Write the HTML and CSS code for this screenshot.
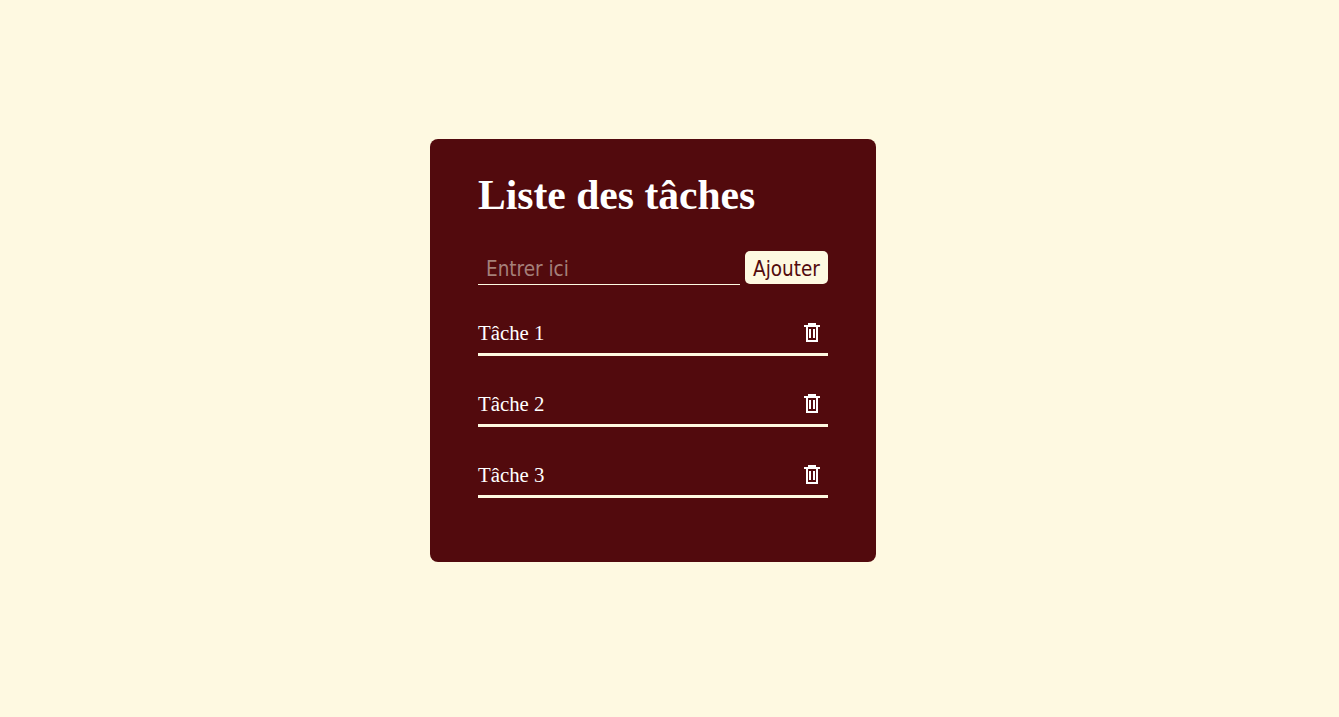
FILE: index.html
```html
<!DOCTYPE html>
<html lang="fr">
<head>
    <meta charset="UTF-8">
    <meta name="viewport" content="width=device-width, initial-scale=1.0">
    <title>Liste des tâches</title>
    <link rel="stylesheet" href="styles.css">
</head>
<body>
    <div class="todo-card">
        <h1 class="todo-title">Liste des tâches</h1>

        <!-- Add form -->
        <form class="todo-form">
            <input type="text" class="todo-input" placeholder="Entrer ici">
            <button type="button" class="add-btn">Ajouter</button>
        </form>

        <!-- Tasks -->
        <ul class="todo-list">
            <li class="todo-item">
                <span>Tâche 1</span>
                <button type="button" class="delete-btn" aria-label="Supprimer">
                    <svg viewBox="0 0 16 19"><path d="M0 3h16M5 3V1h6v2M3 3v15h10V3M6 6v9M10 6v9"/></svg>
                </button>
            </li>
            <li class="todo-item">
                <span>Tâche 2</span>
                <button type="button" class="delete-btn" aria-label="Supprimer">
                    <svg viewBox="0 0 16 19"><path d="M0 3h16M5 3V1h6v2M3 3v15h10V3M6 6v9M10 6v9"/></svg>
                </button>
            </li>
            <li class="todo-item">
                <span>Tâche 3</span>
                <button type="button" class="delete-btn" aria-label="Supprimer">
                    <svg viewBox="0 0 16 19"><path d="M0 3h16M5 3V1h6v2M3 3v15h10V3M6 6v9M10 6v9"/></svg>
                </button>
            </li>
        </ul>
    </div>
</body>
</html>
```

FILE: styles.css
```css
* {
    margin: 0;
    padding: 0;
    box-sizing: border-box;
}

body {
    font-family: "Liberation Serif", serif;
    background: #fef9e1;
    min-height: 100vh;
    display: flex;
    align-items: flex-start;
    justify-content: center;
    padding-top: 139px;
    padding-right: 33px;
}

.todo-card {
    width: 446px;
    height: 423px;
    background: #520a0d;
    border-radius: 8px;
    padding: 33px 48px;
    color: white;
}

.todo-title {
    font-size: 41.6px;
    line-height: 47px;
    font-weight: bold;
    margin-bottom: 32px;
}

.todo-form {
    display: flex;
    justify-content: space-between;
    align-items: flex-start;
    height: 34px;
    margin-bottom: 28px;
}

.todo-input {
    width: 262px;
    height: 34px;
    background: transparent;
    border: none;
    border-bottom: 1px solid #fef9e1;
    outline: none;
    color: white;
    font-family: "DejaVu Sans", sans-serif;
    font-stretch: condensed;
    font-size: 20.500px;
    padding: 2px 8px 0;
}

.todo-input::placeholder {
    color: #a5807a;
    opacity: 1;
}

.add-btn {
    width: 83px;
    height: 33px;
    background: #fef9e1;
    border: none;
    border-radius: 5px;
    color: #520a0d;
    font-family: "DejaVu Sans", sans-serif;
    font-stretch: condensed;
    font-size: 20.500px;
    padding-top: 2px;
    cursor: pointer;
}

.todo-list {
    list-style: none;
}

.todo-item {
    display: flex;
    align-items: center;
    justify-content: space-between;
    height: 43px;
    border-bottom: 3px solid #fef9e1;
    margin-bottom: 28px;
    font-size: 20.8px;
}

.delete-btn {
    display: flex;
    background: transparent;
    border: none;
    margin-right: 8px;
    margin-bottom: 2px;
    cursor: pointer;
}

.delete-btn svg {
    width: 16px;
    height: 19px;
    fill: none;
    stroke: white;
    stroke-width: 2;
}
```
